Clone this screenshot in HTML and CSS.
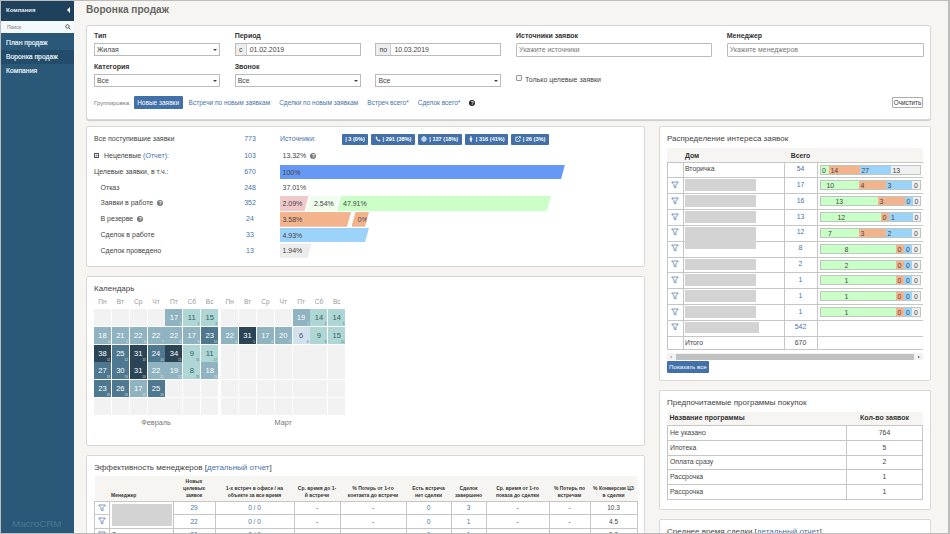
FILE: index.html
```
<!DOCTYPE html>
<html lang="ru">
<head>
<meta charset="UTF-8">
<meta name="viewport" content="width=device-width, initial-scale=1.0">
<title>Воронка продаж</title>
<link rel="stylesheet" href="styles.css">
</head>
<body>
<svg class="defs">
<symbol id="funnel" viewBox="0 0 8 8"><path d="M.7 1h6.6L4.9 3.9v3L3.1 6V3.9z" fill="none" stroke="currentColor" stroke-width=".8"/></symbol>
</svg>
<aside class="sidebar">
<div class="side-head"><span>Компания</span><i class="arrow-left"></i></div>
<div class="side-search"><span>Поиск</span>
<svg viewBox="0 0 8 8"><circle cx="3.3" cy="3.3" r="2.3"/><path d="M5 5l2.3 2.3"/></svg>
</div>
<nav>
<a href="#">План продаж</a>
<a href="#" class="active">Воронка продаж</a>
<a href="#">Компания</a>
</nav>
<div class="brand">MacroCRM</div>
</aside>
<main>
<h1>Воронка продаж</h1>
<section class="card filters">
<div class="fields">
<div><label>Тип</label><div class="select">Жилая</div></div>
<div><label>Период</label><div class="date"><b>с</b><span>01.02.2019</span></div></div>
<div><label></label><div class="date to"><b>по</b><span>10.03.2019</span></div></div>
<div><label>Источники заявок</label><div class="text">Укажите источники</div></div>
<div><label>Менеджер</label><div class="text">Укажите менеджеров</div></div>
<div><label>Категория</label><div class="select">Все</div></div>
<div><label>Звонок</label><div class="select">Все</div></div>
<div><label></label><div class="select">Все</div></div>
<div class="check"><i></i><span>Только целевые заявки</span></div>
</div>
<div class="grouping">
<span class="hint">Группировка:</span>
<a class="btn">Новые заявки</a>
<a>Встречи по новым заявкам</a>
<a>Сделки по новым заявкам</a>
<a>Встреч всего*</a>
<a>Сделок всего*</a>
<i class="help">?</i>
<button class="clear">Очистить</button>
</div>
</section>
<div class="columns">
<div class="left">
<section class="card sales">
<div class="line first"><span>Все поступившие заявки</span><a>773</a>
<div class="sources"><a>Источники:</a>
<b class="s1">| 3 (0%)</b>
<b class="s2"><svg viewBox="0 0 8 8"><path d="M1 1.3l1.5-.5.8 1.8-.8.7 2.2 2.2.7-.8 1.8.8-.5 1.5C4 7.6.4 4 1 1.3z"/></svg>| 291 (38%)</b>
<b class="s3"><svg viewBox="0 0 8 8"><circle cx="4" cy="4" r="3" class="o"/><ellipse cx="4" cy="4" rx="1.3" ry="3" class="o"/><path class="o" d="M1 4h6"/></svg>| 137 (18%)</b>
<b class="s4"><svg viewBox="0 0 8 8"><circle cx="4" cy="1.3" r="1.1"/><path d="M2.2 2.6h3.6v2.2h-.8v2.9H3V4.8h-.8z"/></svg>| 316 (41%)</b>
<b class="s5"><svg viewBox="0 0 8 8"><path class="o" d="M4 1.5H1v5.5h5.5V4.5M3.5 4.5L7 1M4.8.8h2.4v2.4"/></svg>| 26 (3%)</b>
</div></div>
<div class="line second"><span><i class="plus">+</i>Нецелевые <em>(<a>Отчет</a>):</em></span><a>103</a><div class="plain">13.32% <i class="q">?</i></div></div>
<div class="line"><span>Целевые заявки, в т.ч.:</span><a>670</a><div class="bars"><p class="bar blue">100%</p></div></div>
<div class="line sub"><span>Отказ</span><a>248</a><div class="plain">37.01%</div></div>
<div class="line sub"><span>Заявки в работе <i class="q">?</i></span><a>352</a><div class="bars"><p class="bar pink">2.09%</p><p class="bar pale both">2.54%</p><p class="bar green both">47.91%</p></div></div>
<div class="line sub"><span>В резерве <i class="q">?</i></span><a>24</a><div class="bars"><p class="bar orange">3.58%</p><p class="bar orange zero both">0%</p></div></div>
<div class="line sub"><span>Сделок в работе</span><a>33</a><div class="bars"><p class="bar sky">4.93%</p></div></div>
<div class="line sub"><span>Сделок проведено</span><a>13</a><div class="bars"><p class="bar gray">1.94%</p></div></div>
</section>
<section class="card calendar">
<h2>Календарь</h2>
<div class="months">
<div><div class="month" id="feb"></div><p>Февраль</p></div>
<div><div class="month" id="mar"></div><p>Март</p></div>
</div>
</section>
<section class="card managers">
<h2>Эффективность менеджеров [<a>детальный отчет</a>]</h2>
<table>
<colgroup><col class="m1"><col class="m2"><col class="m3"><col class="m4"><col class="m5"><col class="m6"><col class="m7"><col class="m8"><col class="m9"><col class="m10"><col class="m11"></colgroup>
<thead><tr><th></th><th class="name">Менеджер</th><th>Новых<br>целевых<br>заявок</th><th>1-х встреч в офисе / на<br>объекте за все время</th><th>Ср. время до 1-<br>й встречи</th><th>% Потерь от 1-го<br>контакта до встречи</th><th>Есть встреча<br>нет сделки</th><th>Сделок<br>завершено</th><th>Ср. время от 1-го<br>показа до сделки</th><th>% Потерь по<br>встречам</th><th>% Конверсии ЦЗ<br>в сделки</th></tr></thead>
<tbody>
<tr><td><svg class="f"><use href="#funnel"/></svg></td><td rowspan="2" class="hidden"><i></i></td><td><a>29</a></td><td><a>0 / 0</a></td><td>-</td><td>-</td><td><a>0</a></td><td><a>3</a></td><td>-</td><td>-</td><td>10.3</td></tr>
<tr><td><svg class="f"><use href="#funnel"/></svg></td><td><a>22</a></td><td><a>0 / 0</a></td><td>-</td><td>-</td><td><a>0</a></td><td><a>1</a></td><td>-</td><td>-</td><td>4.5</td></tr>
<tr><td><svg class="f"><use href="#funnel"/></svg></td><td class="name">С</td><td><a>20</a></td><td><a>0 / 0</a></td><td>-</td><td>-</td><td><a>0</a></td><td><a>1</a></td><td>-</td><td>-</td><td>5.0</td></tr>
</tbody>
</table>
</section>
</div>
<div class="right">
<section class="card interest">
<h2>Распределение интереса заявок</h2>
<div class="houses" id="houses">
<div class="hrow hhead"><span></span><b>Дом</b><b>Всего</b><span></span></div>
</div>
<div class="scroll"><i class="sl"></i><span></span><i class="sr"></i></div>
<a class="btn all">Показать все</a>
</section>
<section class="card programs">
<h2>Предпочитаемые программы покупок</h2>
<table>
<thead><tr><th class="pn">Название программы</th><th>Кол-во заявок</th></tr></thead>
<tbody>
<tr><td>Не указано</td><td>764</td></tr>
<tr><td>Ипотека</td><td>5</td></tr>
<tr><td>Оплата сразу</td><td>2</td></tr>
<tr><td>Рассрочка</td><td>1</td></tr>
<tr><td>Рассрочка</td><td>1</td></tr>
</tbody>
</table>
</section>
<section class="card average">
<h2>Среднее время сделки [<a>детальный отчет</a>]</h2>
</section>
</div>
</div>
</main>
<script src="script.js"></script>
</body>
</html>
```
FILE: styles.css
```
* {
box-sizing: border-box;
}
body {
margin: 0;
width: 950px;
height: 534px;
overflow: hidden;
display: flex;
border: 1px solid #bcbcbc;
border-width: 1px 2px 1px 1px;
background: #f6f5f1;
font-family: "Liberation Sans", Arial, sans-serif;
font-size: 7px;
line-height: 8px;
color: #444;
}
h1, h2, p {
margin: 0;
}
a {
color: #4a72a8;
text-decoration: none;
}
i, em {
font-style: normal;
}
.defs {
position: absolute;
width: 0;
height: 0;
}
/* sidebar */
.sidebar {
width: 73px;
flex: none;
background: #2a5878;
color: #e4edf3;
display: flex;
flex-direction: column;
}
.side-head {
height: 20px;
background: #1f415b;
display: flex;
align-items: center;
justify-content: space-between;
padding: 0 4px 2px 5px;
font-size: 6px;
font-weight: bold;
}
.arrow-left {
border: 3px solid transparent;
border-left: 0;
border-right-color: #fff;
}
.side-search {
height: 12px;
background: #f4fafc;
display: flex;
align-items: center;
justify-content: space-between;
padding: 0 3px 0 6px;
font-size: 5px;
color: #777;
}
.side-search svg {
width: 6px;
height: 6px;
fill: none;
stroke: #333;
}
.sidebar nav {
padding-top: 3px;
}
.sidebar nav a {
display: block;
height: 14px;
line-height: 14px;
padding-left: 5px;
color: #e6eff5;
font-size: 6.8px;
-webkit-text-stroke: 0.2px #e6eff5;
}
.sidebar nav .active {
background: #234c6a;
}
.brand {
margin-top: auto;
padding: 0 0 4px 11px;
font-size: 9.8px;
line-height: 11px;
color: #497893;
}
/* page */
main {
flex: 1;
height: 532px;
overflow: hidden;
padding: 3px 17px 0 12px;
}
h1 {
font-size: 10.1px;
line-height: 12px;
height: 21px;
color: #666;
}
h2 {
font-size: 8px;
line-height: 9px;
font-weight: normal;
}
.card {
background: #fff;
border: 1px solid #d8d8d6;
border-radius: 2px;
}
.filters {
height: 95px;
padding: 5px 7px 0;
border-radius: 3px;
box-shadow: 0 1px 1px #ccc;
}
.fields {
display: grid;
grid-template-columns: 126px 126px 126px 196px 197px;
grid-auto-rows: 31px;
column-gap: 14.7px;
}
.fields label {
display: block;
height: 12px;
font-weight: bold;
font-size: 7px;
line-height: 9px;
color: #333;
}
.select, .date, .text {
height: 13px;
border: 1px solid #bbb;
line-height: 11px;
font-size: 6.9px;
}
.select {
padding: 0 2px;
display: flex;
justify-content: space-between;
align-items: center;
}
.select::after {
content: "";
border: 2px solid transparent;
border-top-color: #444;
border-bottom: 0;
}
.text {
height: 14px;
line-height: 12px;
padding-left: 2px;
color: #777;
border-radius: 1px;
}
.date {
display: flex;
}
.date b {
width: 11px;
background: #eee;
border-right: 1px solid #ccc;
text-align: center;
font-weight: normal;
}
.date.to b {
width: 15px;
}
.date span {
padding-left: 3px;
}
.check {
display: flex;
gap: 3px;
padding-top: 13px;
font-size: 7px;
line-height: 9px;
}
.check i {
width: 6px;
height: 6px;
border: 1px solid #999;
border-radius: 1px;
background: #f4f4f4;
}
.grouping {
display: flex;
align-items: center;
height: 19px;
gap: 9px;
font-size: 6.5px;
}
.hint {
font-size: 6px;
color: #777;
margin-right: -6px;
}
.btn {
background: #4270a8;
color: #fff;
border-radius: 1px;
height: 13px;
line-height: 13px;
padding: 0 3.5px;
}
.grouping .btn {
margin-right: -3px;
}
.help {
width: 6px;
height: 6px;
border-radius: 50%;
background: #222;
color: #fff;
font-size: 5px;
font-weight: bold;
line-height: 6px;
text-align: center;
}
.clear {
margin-left: auto;
width: 31px;
height: 11px;
padding: 0;
background: #fff;
border: 1px solid #aaa;
border-radius: 1px;
font: 6.3px "Liberation Sans", sans-serif;
color: #333;
}
.columns {
display: flex;
gap: 14px;
margin-top: 6px;
}
.left, .right {
display: flex;
flex-direction: column;
gap: 9px;
}
.left {
width: 559px;
}
.right {
width: 272px;
}
/* sales funnel */
.sales {
height: 141px;
padding: 3.5px 7px 0;
}
.line {
display: grid;
grid-template-columns: 141px 30px 1fr;
height: 15.8px;
align-items: center;
}
.line > a {
text-align: center;
}
.line > div {
margin-left: 15px;
}
.first {
height: 17px;
}
.second {
height: 16.5px;
}
.sub > span {
padding-left: 6.5px;
}
.line em {
color: #4a72a8;
}
.line .plain {
padding-left: 2.5px;
}
.plus {
display: inline-block;
width: 5px;
height: 5px;
border: 1px solid #555;
line-height: 3px;
font-size: 5px;
margin-right: 5px;
vertical-align: 1px;
}
.q {
display: inline-block;
width: 6px;
height: 6px;
margin-left: 2px;
border-radius: 50%;
background: #777;
color: #fff;
font-size: 5px;
font-weight: bold;
line-height: 6px;
text-align: center;
vertical-align: 0;
}
.sources {
display: flex;
align-items: center;
gap: 3px;
}
.sources > a {
width: 59px;
}
.sources b {
height: 11px;
background: #4270a8;
color: #fff;
border-radius: 1px;
font-size: 5.6px;
line-height: 11px;
display: flex;
align-items: center;
justify-content: center;
gap: 2px;
}
.sources svg {
width: 6px;
height: 6px;
fill: #fff;
}
.sources .o {
fill: none;
stroke: #fff;
}
.s1 { width: 26px; }
.s2 { width: 44px; }
.s3 { width: 43.5px; }
.s4 { width: 43.5px; }
.s5 { width: 38px; }
.bars {
display: flex;
}
.bar {
height: 14.8px;
line-height: 15px;
padding-left: 2.5px;
clip-path: polygon(0 0, 100% 0, calc(100% - 4px) 100%, 0 100%);
}
.bar.both {
clip-path: polygon(4px 0, 100% 0, calc(100% - 4px) 100%, 0 100%);
}
.blue { width: 285px; background: #6698f5; }
.pink { width: 28.5px; background: #f0c8c8; }
.pale { width: 31.5px; background: #eefdec; padding-left: 7px; margin-left: -1.5px; }
.green { width: 214px; background: #cbffc8; padding-left: 6px; margin-left: -1.5px; }
.orange { width: 71px; background: #f3b48d; }
.orange.zero { width: 17.5px; padding-left: 6px; margin-left: 0.5px; }
.sky { width: 89px; background: #9cd3fa; }
.gray { width: 31.5px; background: #ececec; }
/* calendar */
.calendar {
height: 170px;
padding: 7px 7px 0;
}
.months {
display: flex;
gap: 3px;
margin-top: 5px;
}
.month {
display: grid;
grid-template-columns: repeat(7, 17px);
grid-template-rows: 10px;
grid-auto-rows: 17px;
gap: 0.87px;
}
.month span {
font-size: 6.6px;
text-align: center;
color: #999;
}
.day {
background: #f2f2f2;
text-align: center;
line-height: 18px;
color: #fff;
position: relative;
font-size: 7.6px;
}
.day small {
position: absolute;
right: 1px;
bottom: 0;
font-size: 3px;
line-height: 4px;
opacity: 0.8;
}
.c1 { background: #d1e1ee; color: #456; }
.c2 { background: #aed6d4; color: #356064; }
.c3 { background: #8fb3c0; }
.c4 { background: #4d7890; }
.c5 { background: #2b4556; }
.months p {
text-align: center;
padding-top: 4px;
font-size: 7.3px;
color: #777;
}
/* tables */
table {
border-collapse: collapse;
table-layout: fixed;
width: 100%;
}
thead {
background: #f6f5f2;
}
th {
padding: 0;
color: #333;
}
td {
border: 1px solid #c6c6c6;
padding: 0;
text-align: center;
}
.managers {
height: 110px;
padding: 7px 7px 0;
}
.managers table {
margin-top: 4px;
}
.managers th {
height: 25px;
font-size: 5px;
line-height: 7px;
vertical-align: bottom;
padding-bottom: 2px;
white-space: nowrap;
}
.managers .name {
text-align: left;
padding-left: 2px;
}
.managers td {
height: 13.5px;
font-size: 6.5px;
line-height: 7px;
}
.m1 { width: 14.5px; }
.m2 { width: 64px; }
.m3 { width: 42px; }
.m4 { width: 79px; }
.m5 { width: 46px; }
.m6 { width: 66px; }
.m7 { width: 45px; }
.m8 { width: 35px; }
.m9 { width: 63px; }
.m10 { width: 41px; }
.m11 { width: 47px; }
.f {
display: block;
width: 8px;
height: 8px;
margin: auto;
color: #5b7ea8;
}
.hidden i {
display: block;
width: 60px;
height: 22px;
margin-left: 2px;
background: #d3d3d3;
}
/* interest */
.interest {
height: 255px;
padding: 7px 7px 0;
}
.houses {
margin-top: 5px;
overflow: hidden;
border-bottom: 1px solid #c6c6c6;
}
.hrow {
display: grid;
grid-template-columns: 15.5px 101px 33px 1fr;
height: 15.85px;
font-size: 6.9px;
}
.hrow > * {
border-top: 1px solid #c6c6c6;
border-left: 1px solid #c6c6c6;
text-align: center;
padding-top: 2.5px;
}
.hrow > :nth-child(2) {
text-align: left;
padding-left: 1.5px;
}
.hhead {
height: 13.5px;
background: #f6f5f2;
}
.hhead > * {
border-color: transparent;
color: #333;
}
.hrow.total {
height: 13.5px;
}
.total > * {
padding-top: 2px;
}
.mask {
display: block;
width: 70.5px;
height: 11.5px;
margin-top: -1.5px;
background: #d3d3d3;
position: relative;
}
.mask.tall {
height: 22px;
}
.mask.wide {
width: 74px;
}
.split {
display: flex;
width: 101px;
height: 10px;
margin: -0.5px 0 0 2px;
text-align: left;
border: 1px solid #bcc8bc;
}
.split span {
height: 8px;
line-height: 9px;
}
.g { background: #cbffc8; }
.r { background: #f3b48d; }
.b { background: #9cd3fa; }
.n { background: #f0f0f0; }
.scroll {
display: flex;
align-items: center;
justify-content: space-between;
height: 7px;
margin-top: 3px;
background: #f2f2f2;
padding: 0 3px;
}
.scroll span {
width: 238px;
height: 6px;
background: #c1c1c1;
}
.sl, .sr {
border: 1.5px solid transparent;
}
.sl {
border-left: 0;
border-right: 2px solid #999;
}
.sr {
border-right: 0;
border-left: 2px solid #444;
}
.all {
display: inline-block;
vertical-align: top;
margin-top: 1px;
height: 12px;
line-height: 12px;
font-size: 6.2px;
padding: 0 2px;
}
/* programs */
.programs {
height: 120px;
padding: 7px 7px 0;
}
.programs table {
margin-top: 4.5px;
}
.programs th {
height: 14px;
font-size: 7px;
}
.programs td {
height: 14.8px;
font-size: 6.9px;
}
.pn {
width: 179px;
}
.programs tr > :first-child {
text-align: left;
padding-left: 2px;
}
.average {
height: 60px;
padding: 6.5px 7px 0;
}
```
FILE: script.js
```
const names = ['Пн', 'Вт', 'Ср', 'Чт', 'Пт', 'Сб', 'Вс'];

function color(v) {
if (v < 8) return 'c1';
if (v < 17) return 'c2';
if (v < 23) return 'c3';
if (v < 31) return 'c4';
return 'c5';
}

// offset = number of empty cells before the 1st
function month(id, offset, values) {
let html = names.map(n => `<span>${n}</span>`).join('');
for (let i = 0; i < 42; i++) {
const v = values[i - offset];
html += v ? `<div class="day ${color(v)}">${v}<small>${i - offset + 1}</small></div>` : '<div class="day"></div>';
}
document.getElementById(id).innerHTML = html;
}

month('feb', 4, [17, 11, 15, 18, 21, 22, 22, 22, 17, 23, 38, 25, 31, 24, 34, 9, 11, 27, 30, 31, 22, 19, 8, 18, 23, 26, 17, 25]);
month('mar', 4, [19, 14, 14, 22, 31, 17, 20, 6, 9, 15]);

// total, values, segment widths, text indent of the first segment
const houses = [
[54, [0, 14, 27, 13], [8, 31, 31, 29], 1.5],
[17, [10, 4, 3, 0], [38, 27, 26.5, 7.5], 6],
[16, [13, 3, 0, 0], [57, 27, 8, 7], 15],
[13, [12, 0, 1, 0], [60, 8.5, 23.5, 7], 17],
[12, [7, 3, 2, 0], [38, 27, 26.5, 7.5], 7.5],
[8, [8, 0, 0, 0], [75, 8.5, 8, 7.5], 24],
[2, [2, 0, 0, 0], [75, 8.5, 8, 7.5], 24],
[1, [1, 0, 0, 0], [75, 8.5, 8, 7.5], 24],
[1, [1, 0, 0, 0], [75, 8.5, 8, 7.5], 24],
[1, [1, 0, 0, 0], [75, 8.5, 8, 7.5], 24],
[542, null]
];
const funnel = '<svg class="f"><use href="#funnel"/></svg>';
let rows = '';
houses.forEach((h, i) => {
let name = '<i class="mask"></i>';
if (i === 0) name = 'Вторичка';
if (i === 4) name = '<i class="mask tall"></i>';
if (i === 5) name = '';
if (i === 10) name = '<i class="mask wide"></i>';
let bar = '';
if (h[1]) {
bar = '<div class="split">' + h[1].map((v, k) => `<span class="${'grbn'[k]}" style="width:${h[2][k]}px;padding-left:${k ? 2 : h[3]}px">${v}</span>`).join('') + '</div>';
}
rows += `<div class="hrow"><span>${i ? funnel : ''}</span><span>${name}</span><span><a>${h[0]}</a></span><span>${bar}</span></div>`;
});
rows += '<div class="hrow total"><span></span><span>Итого</span><span>670</span><span></span></div>';
document.getElementById('houses').innerHTML += rows;
```
